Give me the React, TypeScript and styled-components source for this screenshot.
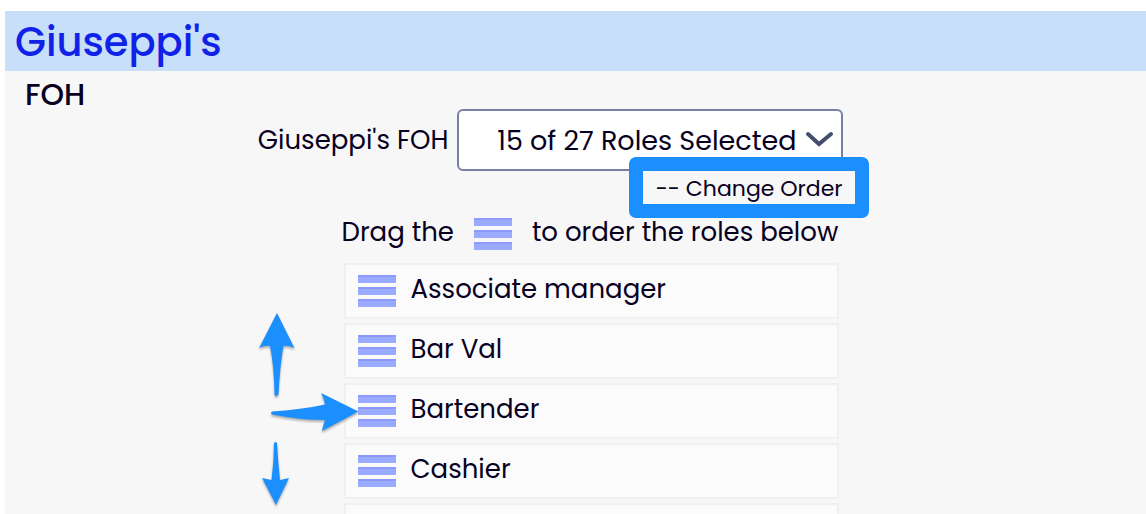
import React from "react";
import styled, { createGlobalStyle } from "styled-components";

const GlobalStyle = createGlobalStyle`
  * { box-sizing: border-box; }
  body {
    margin: 0;
    background: #ffffff;
    color: #08001f;
    font-family: Poppins, Inter, "Liberation Sans", sans-serif;
    font-size: 26px;
  }
`;

const Page = styled.div`
  height: 100vh;
  padding: 11px 0 0 5px;
  overflow: hidden;
  display: flex;
  flex-direction: column;
`;

const Header = styled.header`
  flex: none;
  padding: 2px 10px 0;
  background: #c8dff9;
`;

const Title = styled.h1`
  margin: 0;
  font-size: 40px;
  font-weight: 500;
  line-height: 58px;
  color: #1122e8;
`;

const Main = styled.main`
  flex: 1;
  background: #f7f7f7;
`;

const SectionTitle = styled.h2`
  margin: 0;
  padding: 10px 20px 0;
  font-size: 30px;
  font-weight: 500;
  line-height: 28px;
`;

const Content = styled.div`
  padding: 0 54px 0 0;
  display: flex;
  justify-content: center;
`;

const Form = styled.form`
  width: 588px;
  display: flex;
  flex-direction: column;
  align-items: flex-end;
`;

const Field = styled.div`
  display: flex;
  align-items: center;
  gap: 8px;
  white-space: nowrap;
`;

const SelectBox = styled.div`
  position: relative;
  width: 386px;
`;

const RoleSelect = styled.select`
  appearance: none;
  display: block;
  width: 100%;
  height: 62px;
  padding: 0 44px 0 0;
  border: 2px solid #7680a0;
  border-radius: 6px;
  background: #ffffff;
  color: inherit;
  font: inherit;
  font-size: 27px;
  text-align: right;
  text-align-last: right;
`;

const Chevron = styled.svg`
  position: absolute;
  right: 8px;
  top: 20px;
  pointer-events: none;
`;

const OrderAction = styled.div`
  position: relative;
`;

const OrderButton = styled.button`
  display: block;
  padding: 0;
  border: 0;
  background: none;
  color: inherit;
  font: inherit;
  font-size: 22px;
  line-height: 36px;
`;

const Highlight = styled.span`
  position: absolute;
  top: -14px;
  right: -26px;
  width: 240px;
  height: 61px;
  border: 14px solid #1c8fff;
  border-radius: 7px;
  pointer-events: none;
`;

const Hint = styled.p`
  margin: 0;
  width: 501px;
  height: 54px;
  display: flex;
  align-items: center;
  gap: 20px;
  white-space: nowrap;
`;

const Roles = styled.div`
  position: relative;
  width: 499px;
  padding: 2px 4px 0 0;
`;

const RoleList = styled.ul`
  margin: 0;
  padding: 0;
  list-style: none;
  display: flex;
  flex-direction: column;
  gap: 4px;
`;

const Role = styled.li`
  height: 56px;
  padding: 0 12px;
  display: flex;
  align-items: center;
  gap: 15px;
  border: 2px solid #f0f0f0;
  background: #fbfbfb;
`;

const HandleText = styled.span`
  padding-bottom: 4px;
`;

const Arrows = styled.svg`
  position: absolute;
  left: -94px;
  top: 44px;
  pointer-events: none;
  filter: drop-shadow(0 2px 1px rgba(0, 0, 0, 0.3));
`;

const Handle = () => (
  <svg width="38" height="34" viewBox="0 0 38 34" aria-hidden="true">
    {[1, 13, 25].map((y) => (
      <g key={y}>
        <rect y={y} width="38" height="8" fill="#99aaff" />
        <rect y={y} width="38" height="2" fill="#8c9afd" />
      </g>
    ))}
  </svg>
);

const roles = ["Associate manager", "Bar Val", "Bartender", "Cashier", ""];

export default function App() {
  return (
    <>
      <GlobalStyle />
      <Page>
        <Header>
          <Title>Giuseppi's</Title>
        </Header>
        <Main>
          <SectionTitle>FOH</SectionTitle>
          <Content>
            <Form>
              <Field>
                <label htmlFor="roles">Giuseppi's FOH</label>
                <SelectBox>
                  <RoleSelect id="roles">
                    <option>15 of 27 Roles Selected</option>
                  </RoleSelect>
                  <Chevron width="30" height="22" viewBox="0 0 30 22" fill="none" aria-hidden="true">
                    <path d="M3 5 L14 15 L26 5" stroke="#444f70" strokeWidth="4" strokeLinecap="round" />
                  </Chevron>
                </SelectBox>
              </Field>
              <OrderAction>
                <OrderButton type="button">-- Change Order</OrderButton>
                <Highlight />
              </OrderAction>
              <Hint>
                <HandleText>Drag the</HandleText>
                <Handle />
                <HandleText>to order the roles below</HandleText>
              </Hint>
              <Roles>
                <RoleList>
                  {roles.map((name, i) => (
                    <Role key={i}>
                      <Handle />
                      <HandleText>{name}</HandleText>
                    </Role>
                  ))}
                </RoleList>
                <Arrows width="115" height="205" viewBox="250 305 115 205" fill="#1c8fff" aria-hidden="true">
                  <path d="M277 313 L294.500 348 Q288 345 283.500 346 Q280 366 278.500 394 Q278 396 276 396 Q274.500 396 274.500 394 Q274 366 270 346 Q265 345 259 348 Z" />
                  <path d="M358.500 411.500 L322 431 Q323 425 325 420 Q300 420 272 414.500 Q270 413 272 411.500 Q305 409 325 404.500 Q324 398 321 393 Z" />
                  <path d="M276 505 L289 478 Q284 479 280 480 Q278 461 277 443 Q276 441 274 443 Q274 461 271.500 480 Q267 479 262 478 Z" />
                </Arrows>
              </Roles>
            </Form>
          </Content>
        </Main>
      </Page>
    </>
  );
}
